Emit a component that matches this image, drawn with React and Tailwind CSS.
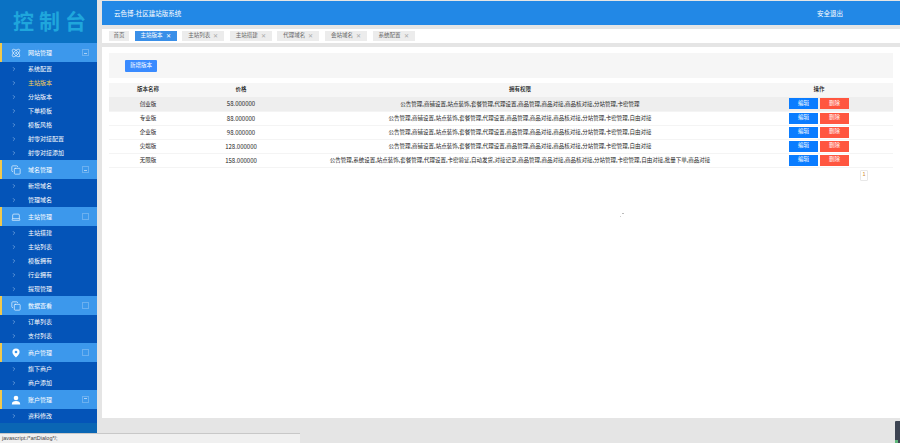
import React from "react";
import { Copy, Laptop, ChevronRight, Atom } from "lucide-react";

const font = { fontFamily: '"Noto Sans CJK SC", "Liberation Sans", sans-serif' };

function PinIcon() {
  return (
    <svg width="10" height="10" viewBox="0 0 10 10" fill="white">
      <path d="M5 .5a3.6 3.6 0 0 0-3.6 3.6C1.4 6.6 5 9.5 5 9.5s3.6-2.9 3.6-5.4A3.6 3.6 0 0 0 5 .5z" />
      <circle cx="5" cy="4" r="1.3" fill="#3c98ec" />
    </svg>
  );
}

function UserIcon() {
  return (
    <svg width="10" height="10" viewBox="0 0 10 10" fill="white">
      <circle cx="5" cy="3" r="2.3" />
      <path d="M.8 9.4c0-2.2 1.6-3.3 4.2-3.3s4.2 1.1 4.2 3.3z" />
    </svg>
  );
}

const line = (C) => function LineIcon() { return <C size={10} strokeWidth={1.5} />; };

const menu = [
  { title: "网站管理", icon: line(Atom), mark: "minus", items: ["系统配置", "主站版本", "分站版本", "下单模板", "模板风格", "射零对接配置", "射零对接添加"] },
  { title: "域名管理", icon: line(Copy), mark: "minus", items: ["新增域名", "管理域名"] },
  { title: "主站管理", icon: line(Laptop), mark: "none", items: ["主站搭建", "主站列表", "模板拥有", "行业拥有", "提现管理"] },
  { title: "数据查看", icon: line(Copy), mark: "none", items: ["订单列表", "支付列表"] },
  { title: "商户管理", icon: PinIcon, mark: "none", items: ["旗下商户", "商户添加"] },
  { title: "账户管理", icon: UserIcon, mark: "top", items: ["资料修改"] },
];

const tabs = ["主站版本", "主站列表", "主站搭建", "代理域名", "会站域名", "系统配置"];

const base = "公告管理,商铺设置,站点装饰,套餐管理,代理设置,商品管理,商品对接,商品核对接,分站管理,卡密管理";
const rows = [
  { name: "创业版", price: "58.000000", perms: base, active: true },
  { name: "专业版", price: "88.000000", perms: base + ",自由对接" },
  { name: "企业版", price: "98.000000", perms: base + ",自由对接" },
  { name: "尖端版", price: "128.000000", perms: base + ",自由对接" },
  { name: "无限版", price: "158.000000", perms: "公告管理,系统设置,站点装饰,套餐管理,代理设置,卡密验证,自动发货,对接记录,商品管理,商品对接,商品核对接,分站管理,卡密管理,自由对接,批量下单,商品对接" },
];

function Mark({ kind }) {
  return (
    <span className="ml-auto mr-[8px] flex h-[7px] w-[7px] items-center justify-center border border-[#6bb0f0]">
      {kind === "minus" && <span className="mt-[2px] h-px w-[3px] bg-[#a8d0f6]" />}
      {kind === "top" && <span className="mb-[2px] h-px w-[3px] bg-[#a8d0f6]" />}
    </span>
  );
}

export default function App() {
  return (
    <div className="relative flex h-[443px] w-[900px] overflow-hidden bg-[#e5e5e5] text-[5.5px] leading-none" style={font}>
      <aside className="flex h-full w-[97px] flex-col bg-[#0a66b4]">
        <div className="flex h-[43px] items-center justify-center bg-[#0a72c4] pb-[3px] pl-[7px] text-[21px] font-bold tracking-[5px] text-[#1fa6dc]">控制台</div>
        {menu.map((m) => {
          const Icon = m.icon;
          return (
            <div key={m.title}>
              <div className="flex h-[19px] items-center border-l-2 border-[#f2c94c] bg-[#3c98ec] text-[6px] text-white">
                <span className="flex w-[26px] justify-center pl-[2px]"><Icon /></span>
                <span>{m.title}</span>
                <Mark kind={m.mark} />
              </div>
              <div className="bg-[#0454b8]">
                {m.items.map((it) => (
                  <div key={it} className={`flex h-[14px] items-center text-[6px] ${it === "主站版本" ? "text-[#f5d25a]" : "text-white"}`}>
                    <span className="flex w-[28px] justify-center pr-[1px]"><ChevronRight size={6} strokeWidth={2} className="text-[#b5d3f2]" /></span>
                    <span>{it}</span>
                  </div>
                ))}
              </div>
            </div>
          );
        })}
      </aside>

      <div className="ml-[5px] flex min-w-0 flex-1 flex-col">
        <header className="mt-px flex h-[24px] items-center justify-between bg-[#2288e6] pl-[12px] pr-[57px] text-[6.5px] text-white">
          <span>云色博-社区建站版系统</span>
          <span className="text-[6.5px]">安全退出</span>
        </header>

        <nav className="mt-[4px] flex h-[14px] items-center gap-[5.6px] bg-white pl-[7px] pb-[1px] text-[5.5px] text-[#666]">
          <span className="flex h-[10px] w-[20px] items-center justify-center bg-[#ececec]">首页</span>
          {tabs.map((t, i) => (
            <span key={t} className={`flex h-[10px] w-[42px] items-center justify-center gap-[3px] ${i === 0 ? "bg-[#3a8fe8] text-white" : "bg-[#ececec]"}`}>
              {t}<span className={`text-[6px] ${i === 0 ? "text-white" : "text-[#aaa]"}`}>✕</span>
            </span>
          ))}
        </nav>

        <main className="relative mt-[4px] flex h-[371px] flex-col bg-white px-[7px] pt-[6px]">
          <div className="flex h-[25px] items-center bg-[#f6f6f6] pl-[16px]">
            <button className="flex h-[12px] w-[32px] items-center justify-center rounded-[1px] bg-[#3a8bff] text-white">新增版本</button>
          </div>

          <table className="mt-[5px] w-[784px] table-fixed border-collapse text-[#222]">
            <colgroup>
              <col className="w-[78px]" />
              <col className="w-[108px]" />
              <col className="w-[450px]" />
              <col />
            </colgroup>
            <thead>
              <tr className="h-[14px] bg-[#f6f6f6] text-[#111]">
                <th className="font-medium">版本名称</th>
                <th className="font-medium">价格</th>
                <th className="font-medium">拥有权限</th>
                <th className="font-medium">操作</th>
              </tr>
            </thead>
            <tbody>
              {rows.map((r) => (
                <tr key={r.name} className={`h-[14px] border-b border-[#f4f4f4] text-center ${r.active ? "bg-[#eeeeee]" : ""}`}>
                  <td className="pt-px">{r.name}</td>
                  <td className="pt-px text-[6px]">{r.price}</td>
                  <td className="whitespace-nowrap pt-px">{r.perms}</td>
                  <td>
                    <div className="flex justify-center gap-[2px]">
                      <button className="flex h-[11px] w-[29px] items-center justify-center bg-[#0a7cff] text-white">编辑</button>
                      <button className="flex h-[11px] w-[29px] items-center justify-center bg-[#ff5640] text-white">删除</button>
                    </div>
                  </td>
                </tr>
              ))}
            </tbody>
          </table>

          <div className="mt-[2px] flex w-[784px] justify-end pr-[25px]">
            <span className="flex h-[11px] w-[8px] items-center justify-center rounded-[1px] border border-[#e8e8e8] text-[#d08a2c]">1</span>
          </div>
          <span className="absolute left-[520px] top-[166px] h-px w-[2px] bg-[#bbb]" />
          <span className="absolute left-[518px] top-[169px] h-px w-px bg-[#ccc]" />
        </main>
      </div>

      <div className="absolute bottom-0 left-0 flex h-[10px] w-[300px] items-center border-t border-[#c8c8c8] bg-[#f0f0f0] pl-[2px] text-[5.5px] text-[#444]" style={{ fontFamily: '"Liberation Sans", sans-serif' }}>
        javascript:/*artDialog*/;
      </div>
      <div className="absolute bottom-0 right-0 flex h-[22px] w-[5px] flex-col justify-end rounded-tl-[1px] bg-[#3d4452]">
        <span className="h-[3px] w-[3px] bg-[#5fb87a]" />
      </div>
    </div>
  );
}
